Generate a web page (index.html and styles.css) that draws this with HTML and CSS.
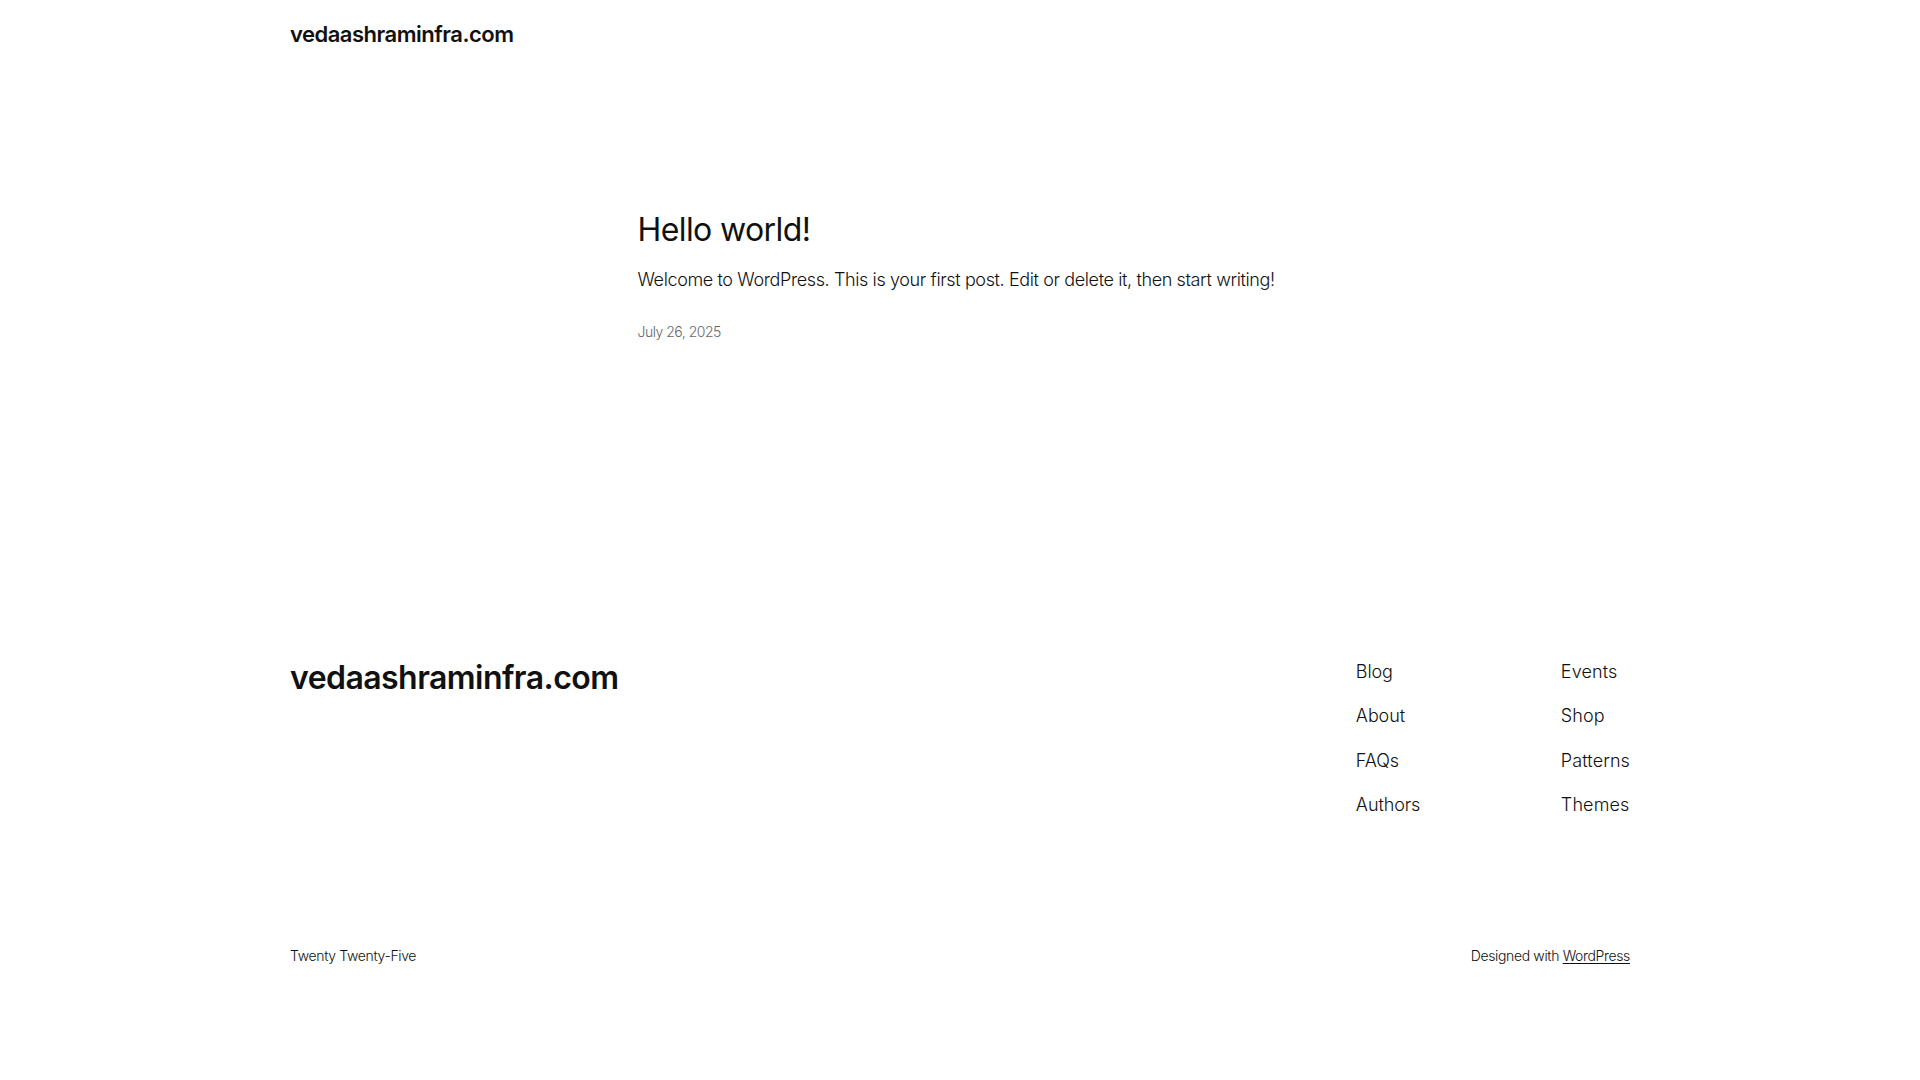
FILE: index.html
```html
<!DOCTYPE html>
<html lang="en">
<head>
<meta charset="utf-8">
<title>vedaashraminfra.com</title>
<link rel="stylesheet" href="styles.css">
</head>
<body>
<header class="site-header">
  <div class="wide">
    <a class="site-title" href="#">vedaashraminfra.com</a>
  </div>
</header>
<main class="site-main">
  <article class="post">
    <h2 class="post-title"><a href="#">Hello world!</a></h2>
    <p class="post-excerpt">Welcome to WordPress. This is your first post. Edit or delete it, then start writing!</p>
    <div class="post-date">July 26, 2025</div>
  </article>
</main>
<footer class="site-footer">
  <div class="wide">
    <div class="footer-top">
      <h2 class="footer-title"><a href="#">vedaashraminfra.com</a></h2>
      <nav class="footer-nav">
        <ul class="nav-col nav-col-left">
          <li><a href="#">Blog</a></li>
          <li><a href="#">About</a></li>
          <li><a href="#">FAQs</a></li>
          <li><a href="#">Authors</a></li>
        </ul>
        <ul class="nav-col">
          <li><a href="#">Events</a></li>
          <li><a href="#">Shop</a></li>
          <li><a href="#">Patterns</a></li>
          <li><a href="#">Themes</a></li>
        </ul>
      </nav>
    </div>
    <div class="footer-bottom">
      <p class="credit">Twenty Twenty-Five</p>
      <p class="credit">Designed with <a class="underline" href="#">WordPress</a></p>
    </div>
  </div>
</footer>
</body>
</html>
```
FILE: styles.css
```css
* { box-sizing: border-box; }
html, body { margin: 0; padding: 0; background: #ffffff; }
body {
  font-family: "Inter", "Noto Sans", sans-serif;
  font-weight: 300;
  color: #111111;
  font-size: 18px;
  letter-spacing: -0.1px;
}
a { color: inherit; text-decoration: none; }
.wide { width: 1340px; margin: 0 auto; }

.site-header { padding-top: 19px; }
.site-title {
  display: block;
  font-size: 22px;
  line-height: 1.4;
  font-weight: 600;
  letter-spacing: -0.5px;
}

.site-main { padding-top: 161.5px; }
.post { width: 645px; margin: 0 auto; }
.post-title {
  margin: 0;
  font-size: 32px;
  line-height: 1.2;
  font-weight: 400;
  letter-spacing: -0.6px;
}
.post-excerpt {
  margin: 16px 0 0;
  font-size: 18px;
  line-height: 1.6;
  letter-spacing: -0.38px;
  white-space: nowrap;
}
.post-date {
  margin-top: 28px;
  font-size: 14px;
  line-height: 1.4;
  color: #686868;
  letter-spacing: -0.5px;
}

.site-footer { padding-top: 317px; }
.footer-top {
  display: flex;
  justify-content: space-between;
  align-items: flex-start;
}
.footer-title {
  margin: 0;
  font-size: 32px;
  line-height: 1.2;
  font-weight: 600;
  letter-spacing: -0.55px;
}
.footer-nav {
  display: grid;
  grid-template-columns: 205px auto;
}
.nav-col {
  list-style: none;
  margin: 0;
  padding: 0;
  display: flex;
  flex-direction: column;
  gap: 19.2px;
}
.nav-col li {
  font-size: 18px;
  line-height: 1.4;
}
.nav-col-left li { letter-spacing: -0.1px; }
.nav-col:not(.nav-col-left) li { letter-spacing: 0.1px; }
.footer-bottom {
  display: flex;
  justify-content: space-between;
  margin-top: 129px;
}
.credit {
  margin: 0;
  font-size: 14px;
  line-height: 1.4;
  letter-spacing: -0.35px;
}
.underline { text-decoration: underline; text-underline-offset: 2px; }
```
